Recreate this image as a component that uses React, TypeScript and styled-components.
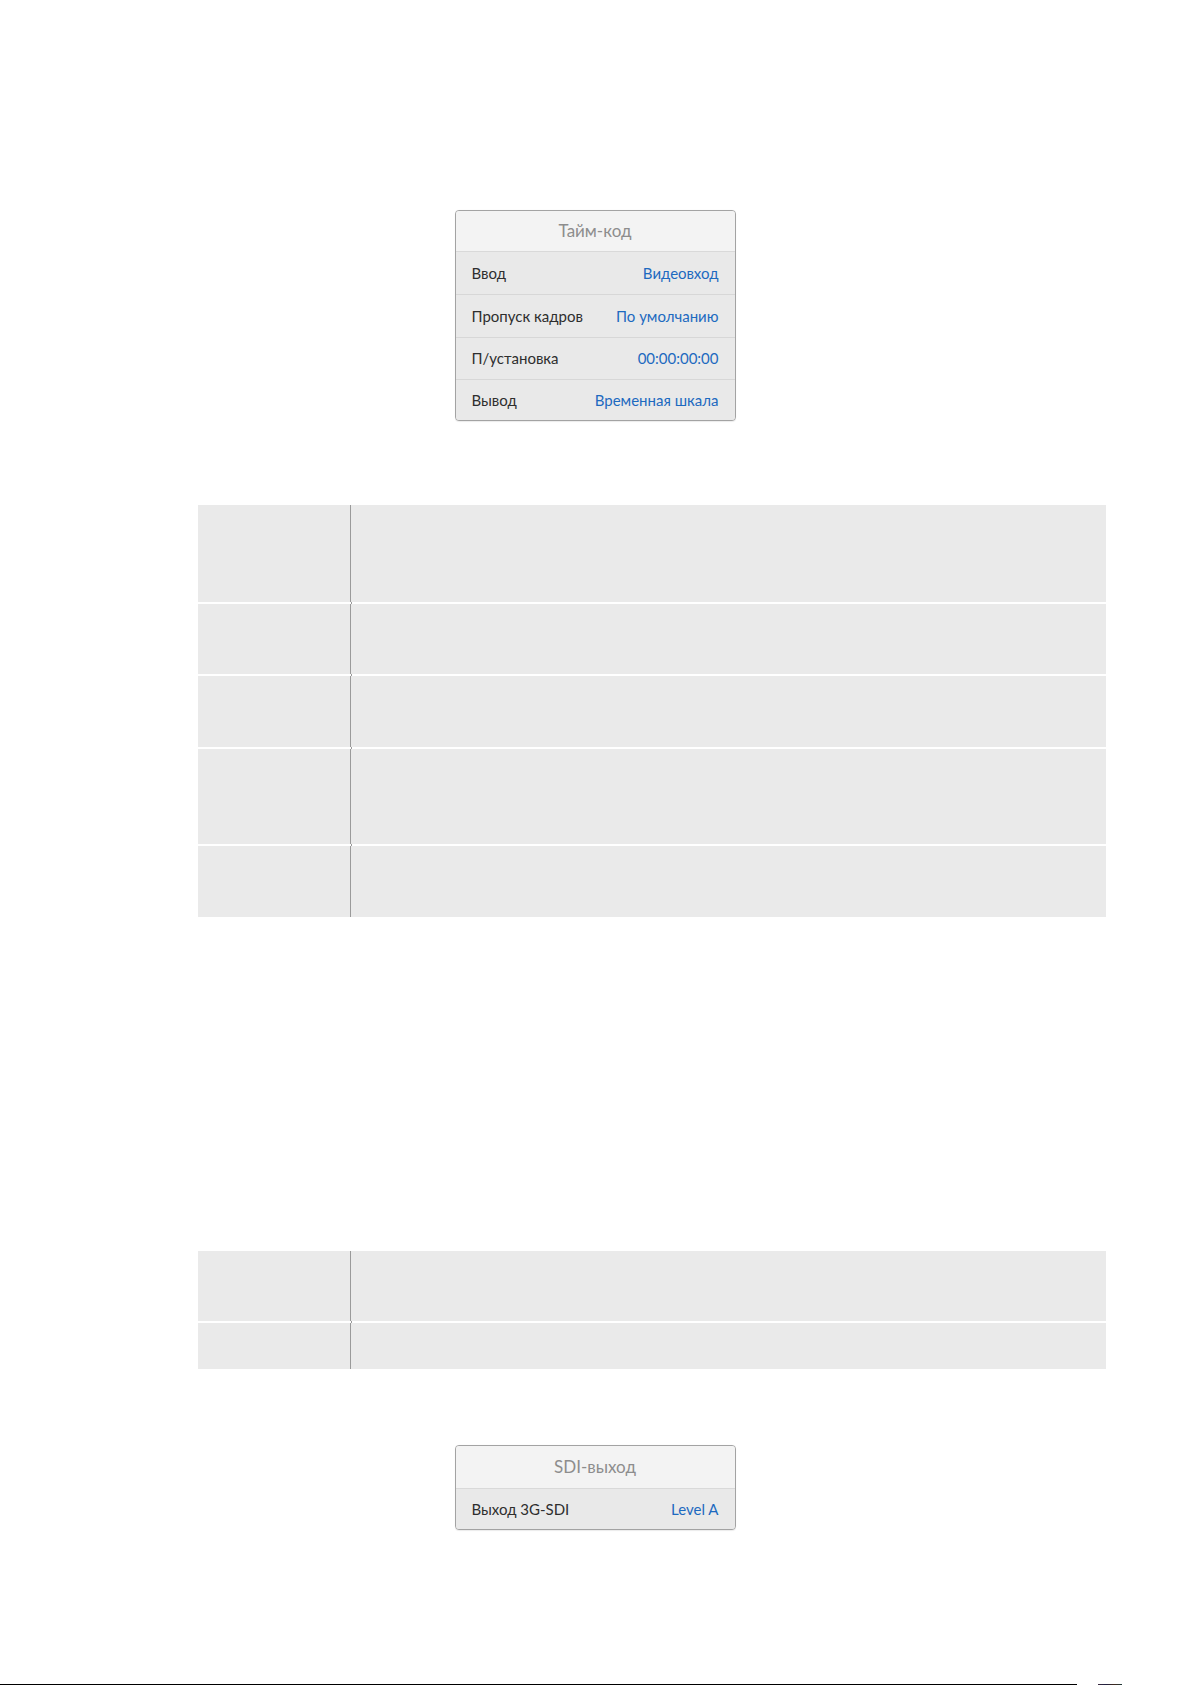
import React from "react";
import styled, { createGlobalStyle } from "styled-components";

const GlobalStyle = createGlobalStyle`
  html, body {
    margin: 0;
    padding: 0;
    background: #ffffff;
  }
  body {
    font-family: Lato, "Noto Sans", "Liberation Sans", sans-serif;
  }
`;

const Page = styled.div`
  width: 1192px;
  height: 1685px;
  display: flex;
  flex-direction: column;
  align-items: stretch;
  box-sizing: border-box;
  padding-top: 210px;
  background: #fff;
  overflow: hidden;
`;

const CardWrap = styled.div<{ $mt?: number }>`
  display: flex;
  justify-content: center;
  margin-top: ${(p) => p.$mt ?? 0}px;
  padding-right: 2px;
`;

const Card = styled.div`
  width: 281px;
  box-sizing: border-box;
  border: 1px solid #a3a3a3;
  border-radius: 4px;
  overflow: hidden;
  background: #e9e9e9;
  box-shadow: 0 0.5px 1px rgba(0, 0, 0, 0.08);
`;

const CardHeader = styled.div<{ $h: number }>`
  height: ${(p) => p.$h}px;
  display: flex;
  align-items: center;
  justify-content: center;
  background: #f3f3f3;
  border-bottom: 1px solid #d9d9d9;
  box-sizing: border-box;
  color: #8d8d8d;
  font-size: 17px;
  padding-bottom: 1px;
`;

const CardRow = styled.div<{ $h: number; $first?: boolean }>`
  height: ${(p) => p.$h}px;
  display: flex;
  align-items: center;
  justify-content: space-between;
  padding: 0 16px 1px 16px;
  box-sizing: border-box;
  border-top: ${(p) => (p.$first ? "none" : "1px solid #d7d7d7")};
  background: #e9e9e9;
  font-size: 15px;
`;

const Label = styled.span`
  color: #2e2e2e;
`;

const Value = styled.span`
  color: #1d6ac0;
`;

const TableWrap = styled.div<{ $mt: number }>`
  margin-top: ${(p) => p.$mt}px;
  padding-left: 198px;
  padding-right: 86px;
`;

const Table = styled.div`
  display: grid;
  grid-template-columns: 153px 1fr;
  row-gap: 2px;
  background: linear-gradient(
      to right,
      transparent 153px,
      #9a9a9a 153px,
      #9a9a9a 154px,
      transparent 154px
    ),
    #ffffff;
`;

const LabelCell = styled.div<{ $h: number }>`
  height: ${(p) => p.$h}px;
  background: #eaeaea;
  border-right: 1px solid #9a9a9a;
  box-sizing: border-box;
`;

const DescCell = styled.div<{ $h: number }>`
  height: ${(p) => p.$h}px;
  background: #eaeaea;
`;

const Spacer = styled.div`
  flex: 1;
`;

const Footer = styled.div`
  height: 1px;
  display: flex;
  align-items: stretch;
`;

const FooterLine = styled.div`
  width: 1077px;
  background: #000;
`;

const FooterMark = styled.div`
  width: 24px;
  margin-left: 21px;
  background: linear-gradient(to right, #3a2a40, #202040, #402a20, #203a3a);
`;

type Row = { label: string; value: string };

const timecodeRows: Row[] = [
  { label: "Ввод", value: "Видеовход" },
  { label: "Пропуск кадров", value: "По умолчанию" },
  { label: "П/установка", value: "00:00:00:00" },
  { label: "Вывод", value: "Временная шкала" },
];

const table1Heights = [97, 70, 71, 95, 71];
const table2Heights = [70, 46];

function SettingsCard({
  title,
  rows,
  headerH,
  rowH,
}: {
  title: string;
  rows: Row[];
  headerH: number;
  rowH: number[];
}) {
  return (
    <Card>
      <CardHeader $h={headerH}>{title}</CardHeader>
      {rows.map((r, i) => (
        <CardRow key={r.label} $h={rowH[i]} $first={i === 0}>
          <Label>{r.label}</Label>
          <Value>{r.value}</Value>
        </CardRow>
      ))}
    </Card>
  );
}

function BlankTable({ heights, mt }: { heights: number[]; mt: number }) {
  return (
    <TableWrap $mt={mt}>
      <Table>
        {heights.map((h, i) => (
          <React.Fragment key={i}>
            <LabelCell $h={h} />
            <DescCell $h={h} />
          </React.Fragment>
        ))}
      </Table>
    </TableWrap>
  );
}

export default function App() {
  return (
    <>
      <GlobalStyle />
      <Page>
        <CardWrap>
          <SettingsCard
            title="Тайм-код"
            rows={timecodeRows}
            headerH={41}
            rowH={[42, 43, 42, 41]}
          />
        </CardWrap>
        <BlankTable heights={table1Heights} mt={84} />
        <BlankTable heights={table2Heights} mt={334} />
        <CardWrap $mt={76}>
          <SettingsCard
            title="SDI-выход"
            rows={[{ label: "Выход 3G-SDI", value: "Level A" }]}
            headerH={43}
            rowH={[40]}
          />
        </CardWrap>
        <Spacer />
        <Footer>
          <FooterLine />
          <FooterMark />
        </Footer>
      </Page>
    </>
  );
}
